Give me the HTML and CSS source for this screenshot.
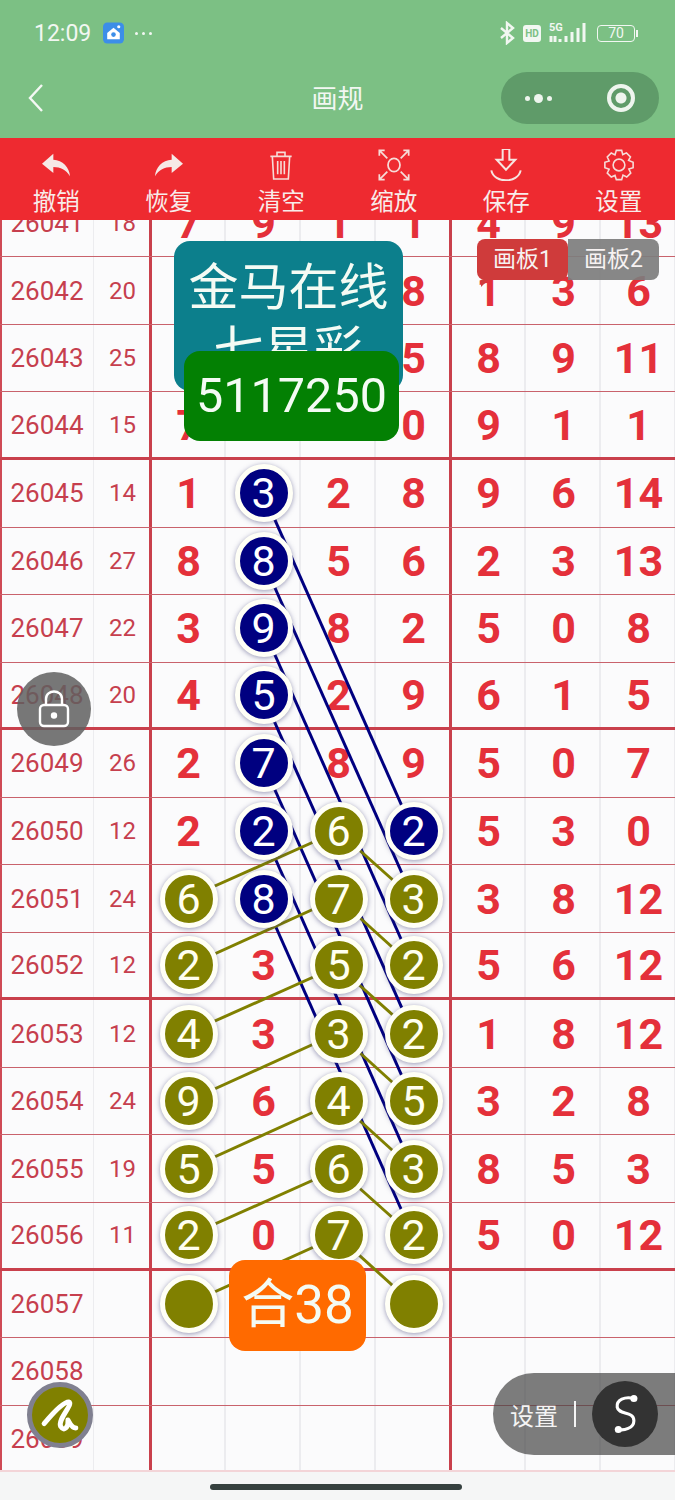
FILE: index.html
```html
<!DOCTYPE html>
<html lang="zh">
<head>
    <meta charset="UTF-8">
    <meta name="viewport" content="width=device-width, initial-scale=1.0">
    <title>画规</title>
    <link rel="stylesheet" href="styles.css">
</head>
<body>

    <header class="app-header">
        <div class="status-bar">
            <span class="clock">12:09</span>
            <svg class="app-icon" viewBox="0 0 20 20"><rect width="20" height="20" rx="4" fill="#3c8ee8"/><path d="M4 10 L10 5 L16 10 V16 H4 Z" fill="#fff"/><circle cx="10" cy="11.5" r="2.2" fill="#3c8ee8"/><circle cx="15" cy="4" r="1.5" fill="#fff"/></svg>
            <span class="status-dots"><i></i><i></i><i></i></span>
            <span class="status-right">
                <svg class="bt" viewBox="0 0 16 24"><path d="M2 7 L14 17 L8 22 V2 L14 7 L2 17" fill="none" stroke="#f2f7f2" stroke-width="2.4"/></svg>
                <span class="hd">HD</span>
                <svg class="signal" viewBox="0 0 40 22">
                    <text x="0" y="9" class="five-g">5G</text>
                    <path d="M2 20 V14 M6 20 V14 M11 20 v-3 M17 20 v-6 M23 20 V10 M29 20 V6 M35 20 V1" stroke="#f2f7f2" stroke-width="3" fill="none"/>
                </svg>
                <span class="battery">70</span><span class="battery-cap"></span>
            </span>
        </div>
        <div class="nav-bar">
            <svg class="back" viewBox="0 0 18 32"><path d="M15 3 L3 16 L15 29" fill="none" stroke="#f4f8f4" stroke-width="2.4"/></svg>
            <span class="nav-title">画规</span>
            <div class="capsule">
                <span class="capsule-dots"><i></i><i class="big"></i><i></i></span>
                <span class="capsule-target"></span>
            </div>
        </div>
    </header>

    <nav class="toolbar">
        <div class="tool">
            <svg viewBox="0 0 24 24"><path d="M10 3.5 L1.5 11 L10 18 V13.5 C15.5 13.5 19.5 15.5 22.5 20.5 C22 13.5 17 8.5 10 8 Z" fill="#f6e9e6"/></svg>
            <span>撤销</span>
        </div>
        <div class="tool">
            <svg class="flip" viewBox="0 0 24 24"><path d="M10 3.5 L1.5 11 L10 18 V13.5 C15.5 13.5 19.5 15.5 22.5 20.5 C22 13.5 17 8.5 10 8 Z" fill="#f6e9e6"/></svg>
            <span>恢复</span>
        </div>
        <div class="tool">
            <svg viewBox="0 0 24 24" fill="none" stroke="#f6dcd8" stroke-width="1.2"><path d="M4 5.5 H20 M9 5 V2.5 H15 V5 M5.5 5.5 L6.5 22.5 H17.5 L18.5 5.5 M9.5 9 V19 M12 9 V19 M14.5 9 V19"/></svg>
            <span>清空</span>
        </div>
        <div class="tool">
            <svg viewBox="0 0 24 24" fill="none" stroke="#f6dcd8" stroke-width="1.3"><ellipse cx="12" cy="12" rx="4.5" ry="5"/><path d="M1 5 V1 H5 M1 1 L7 7 M23 5 V1 H19 M23 1 L17 7 M1 19 V23 H5 M1 23 L7 17 M23 19 V23 H19 M23 23 L17 17"/></svg>
            <span>缩放</span>
        </div>
        <div class="tool">
            <svg viewBox="0 0 24 24" fill="none" stroke="#f6e4e0" stroke-width="1.5"><path d="M9.5 0 H14.5 V8 H19 L12 15.5 L5 8 H9.5 Z M1 16 C3 26 21 26 23 16"/></svg>
            <span>保存</span>
        </div>
        <div class="tool">
            <svg viewBox="0 0 24 24" fill="none" stroke="#f6dcd8" stroke-width="1.2"><circle cx="12" cy="12" r="4.4"/><path d="M10 1 H14 L14.8 4.2 L17.6 2.9 L20.6 5.9 L19.2 8.6 L22.6 10 V14 L19.4 15 L20.8 18 L17.8 21 L15 19.6 L14 23 H10 L9 19.8 L6.2 21 L3.2 18 L4.6 15.2 L1.4 14 V10 L4.6 9 L3.2 6 L6.2 3 L9 4.4 Z"/></svg>
            <span>设置</span>
        </div>
    </nav>

    <main class="board">
        <div class="sheet">
            <div class="row"><span class="id">26041</span><span class="sum">18</span><span class="d">7</span><span class="d">9</span><span class="d">1</span><span class="d">1</span><span class="d">4</span><span class="d">9</span><span class="d">13</span></div>
            <div class="row"><span class="id">26042</span><span class="sum">20</span><span class="d"></span><span class="d"></span><span class="d"></span><span class="d">8</span><span class="d">1</span><span class="d">3</span><span class="d">6</span></div>
            <div class="row"><span class="id">26043</span><span class="sum">25</span><span class="d"></span><span class="d"></span><span class="d"></span><span class="d">5</span><span class="d">8</span><span class="d">9</span><span class="d">11</span></div>
            <div class="row group-end"><span class="id">26044</span><span class="sum">15</span><span class="d">7</span><span class="d"></span><span class="d"></span><span class="d">0</span><span class="d">9</span><span class="d">1</span><span class="d">1</span></div>

            <div class="row"><span class="id">26045</span><span class="sum">14</span><span class="d">1</span><span class="d"><b class="ball navy">3</b></span><span class="d">2</span><span class="d">8</span><span class="d">9</span><span class="d">6</span><span class="d">14</span></div>
            <div class="row"><span class="id">26046</span><span class="sum">27</span><span class="d">8</span><span class="d"><b class="ball navy">8</b></span><span class="d">5</span><span class="d">6</span><span class="d">2</span><span class="d">3</span><span class="d">13</span></div>
            <div class="row"><span class="id">26047</span><span class="sum">22</span><span class="d">3</span><span class="d"><b class="ball navy">9</b></span><span class="d">8</span><span class="d">2</span><span class="d">5</span><span class="d">0</span><span class="d">8</span></div>
            <div class="row group-end"><span class="id">26048</span><span class="sum">20</span><span class="d">4</span><span class="d"><b class="ball navy">5</b></span><span class="d">2</span><span class="d">9</span><span class="d">6</span><span class="d">1</span><span class="d">5</span></div>

            <div class="row"><span class="id">26049</span><span class="sum">26</span><span class="d">2</span><span class="d"><b class="ball navy">7</b></span><span class="d">8</span><span class="d">9</span><span class="d">5</span><span class="d">0</span><span class="d">7</span></div>
            <div class="row"><span class="id">26050</span><span class="sum">12</span><span class="d">2</span><span class="d"><b class="ball navy">2</b></span><span class="d"><b class="ball olive">6</b></span><span class="d"><b class="ball navy">2</b></span><span class="d">5</span><span class="d">3</span><span class="d">0</span></div>
            <div class="row"><span class="id">26051</span><span class="sum">24</span><span class="d"><b class="ball olive">6</b></span><span class="d"><b class="ball navy">8</b></span><span class="d"><b class="ball olive">7</b></span><span class="d"><b class="ball olive">3</b></span><span class="d">3</span><span class="d">8</span><span class="d">12</span></div>
            <div class="row group-end"><span class="id">26052</span><span class="sum">12</span><span class="d"><b class="ball olive">2</b></span><span class="d">3</span><span class="d"><b class="ball olive">5</b></span><span class="d"><b class="ball olive">2</b></span><span class="d">5</span><span class="d">6</span><span class="d">12</span></div>

            <div class="row"><span class="id">26053</span><span class="sum">12</span><span class="d"><b class="ball olive">4</b></span><span class="d">3</span><span class="d"><b class="ball olive">3</b></span><span class="d"><b class="ball olive">2</b></span><span class="d">1</span><span class="d">8</span><span class="d">12</span></div>
            <div class="row"><span class="id">26054</span><span class="sum">24</span><span class="d"><b class="ball olive">9</b></span><span class="d">6</span><span class="d"><b class="ball olive">4</b></span><span class="d"><b class="ball olive">5</b></span><span class="d">3</span><span class="d">2</span><span class="d">8</span></div>
            <div class="row"><span class="id">26055</span><span class="sum">19</span><span class="d"><b class="ball olive">5</b></span><span class="d">5</span><span class="d"><b class="ball olive">6</b></span><span class="d"><b class="ball olive">3</b></span><span class="d">8</span><span class="d">5</span><span class="d">3</span></div>
            <div class="row group-end"><span class="id">26056</span><span class="sum">11</span><span class="d"><b class="ball olive">2</b></span><span class="d">0</span><span class="d"><b class="ball olive">7</b></span><span class="d"><b class="ball olive">2</b></span><span class="d">5</span><span class="d">0</span><span class="d">12</span></div>

            <div class="row"><span class="id">26057</span><span class="sum"></span><span class="d"><b class="ball olive"></b></span><span class="d"></span><span class="d"></span><span class="d"><b class="ball olive"></b></span><span class="d"></span><span class="d"></span><span class="d"></span></div>
            <div class="row"><span class="id">26058</span><span class="sum"></span><span class="d"></span><span class="d"></span><span class="d"></span><span class="d"></span><span class="d"></span><span class="d"></span><span class="d"></span></div>
            <div class="row"><span class="id">26059</span><span class="sum"></span><span class="d"></span><span class="d"></span><span class="d"></span><span class="d"></span><span class="d"></span><span class="d"></span><span class="d"></span></div>
        </div>

        <!-- lines between balls, y is measured from the top of the board -->
        <svg class="links" viewBox="0 0 675 1252">
            <g stroke="#000080" stroke-width="3">
                <line x1="263" y1="273" x2="413" y2="611"/>
                <line x1="263" y1="341" x2="413" y2="678"/>
                <line x1="263" y1="408" x2="413" y2="746"/>
                <line x1="263" y1="476" x2="413" y2="813"/>
                <line x1="263" y1="543" x2="413" y2="881"/>
                <line x1="263" y1="611" x2="413" y2="949"/>
                <line x1="263" y1="678" x2="413" y2="1016"/>
            </g>
            <g stroke="#808000" stroke-width="3">
                <line x1="188" y1="678" x2="338" y2="611"/>
                <line x1="188" y1="746" x2="338" y2="678"/>
                <line x1="188" y1="813" x2="338" y2="746"/>
                <line x1="188" y1="881" x2="338" y2="813"/>
                <line x1="188" y1="949" x2="338" y2="881"/>
                <line x1="188" y1="1016" x2="338" y2="949"/>
                <line x1="188" y1="1084" x2="338" y2="1016"/>
                <line x1="338" y1="611" x2="413" y2="678"/>
                <line x1="338" y1="678" x2="413" y2="746"/>
                <line x1="338" y1="746" x2="413" y2="813"/>
                <line x1="338" y1="813" x2="413" y2="881"/>
                <line x1="338" y1="881" x2="413" y2="949"/>
                <line x1="338" y1="949" x2="413" y2="1016"/>
                <line x1="338" y1="1016" x2="413" y2="1084"/>
            </g>
        </svg>

        <div class="tag tag-name">金马在线<br>七星彩</div>
        <div class="tag tag-code">5117250</div>
        <div class="tag tag-total">合38</div>

        <div class="tabs">
            <span class="tab active">画板1</span>
            <span class="tab">画板2</span>
        </div>

        <div class="lock">
            <svg viewBox="0 0 32 38" fill="none" stroke="#fff" stroke-width="2.4"><path d="M8 15 V9 C8 -1 24 -1 24 9 V15"/><rect x="2" y="15" width="28" height="21" rx="4"/><circle cx="16" cy="25.5" r="2" fill="#fff"/></svg>
        </div>

        <div class="pen">
            <svg viewBox="0 0 36 36" fill="none" stroke="#fff" stroke-width="3.4" stroke-linecap="round" stroke-linejoin="round"><path d="M7 24 C12 18 20 9 24 9 C28 10 16 21 18.5 26 C21 30 24 26 23.5 21.5 C25 24 26 27 29 27"/></svg>
        </div>

        <div class="settings-pill">
            <span>设置</span>
            <i class="pill-sep"></i>
            <span class="pill-logo">
                <svg viewBox="0 0 36 36" fill="none" stroke="#fff" stroke-width="2.8" stroke-linecap="round"><path d="M26 4 C18 2 10 5 11 12 C12 19 26 15 26 24 C26 31 17 33 12 32"/><circle cx="26" cy="4" r="3.2" fill="#fff" stroke="none"/><circle cx="12" cy="32" r="3.2" fill="#fff" stroke="none"/></svg>
            </span>
        </div>
    </main>

    <footer class="home-area"><span class="home-bar"></span></footer>

</body>
</html>
```

FILE: styles.css
```css
* { box-sizing: border-box; }

body {
    display: flex;
    flex-direction: column;
    width: 675px;
    height: 1500px;
    margin: 0;
    overflow: hidden;
    background-color: #f5f6f6;
    font-family: Roboto, "Noto Sans CJK SC", sans-serif;
}

/* header verde */
.app-header {
    height: 138px;
    background-color: #7cc084;
    color: #f2f7f2;
}

.status-bar {
    display: flex;
    align-items: center;
    height: 66px;
    padding: 0 37px 0 34px;
}

.clock { font-size: 23px; }

.app-icon { width: 21px; height: 22px; margin-left: 12px; }

.status-dots { display: flex; gap: 4px; margin-left: 11px; }
.status-dots i { width: 3px; height: 3px; border-radius: 50%; background-color: #f2f7f2; }

.status-right { display: flex; align-items: center; margin-left: auto; }
.bt { width: 16px; height: 24px; }

.hd {
    width: 18px;
    height: 17px;
    margin-left: 8px;
    border-radius: 3px;
    background-color: #f2f7f2;
    color: #7cc084;
    font-size: 10px;
    font-weight: 700;
    line-height: 17px;
    text-align: center;
}

.signal { width: 40px; height: 22px; margin-left: 8px; }
.five-g { fill: #f2f7f2; font-size: 11px; font-weight: 700; }

.battery {
    width: 38px;
    height: 17px;
    margin-left: 8px;
    border: 1.5px solid #f2f7f2;
    border-radius: 4px;
    font-size: 14px;
    line-height: 14px;
    text-align: center;
}

.battery-cap { width: 2px; height: 7px; margin-left: 1px; background-color: #f2f7f2; }

.nav-bar {
    position: relative;
    display: flex;
    align-items: center;
    justify-content: space-between;
    height: 64px;
    padding: 0 16px 0 27px;
}

.back { width: 18px; height: 32px; }

.nav-title {
    position: absolute;
    left: 0;
    right: 0;
    margin-top: -4px;
    font-size: 26px;
    text-align: center;
}

.capsule {
    display: flex;
    align-items: center;
    justify-content: space-between;
    width: 158px;
    height: 52px;
    padding: 0 24px;
    border-radius: 26px;
    background-color: #5f9b69;
}

.capsule-dots { display: flex; align-items: center; gap: 4px; }
.capsule-dots i { width: 5px; height: 5px; border-radius: 50%; background-color: #eef5ee; }
.capsule-dots i.big { width: 9px; height: 9px; }

.capsule-target {
    width: 28px;
    height: 28px;
    border: 4px solid #eef5ee;
    border-radius: 50%;
    background: radial-gradient(circle, #eef5ee 0 5px, transparent 6px);
}

/* barra de herramientas roja */
.toolbar {
    display: grid;
    grid-template-columns: repeat(6, 1fr);
    position: relative;
    z-index: 5;
    height: 82px;
    background-color: #ee2a30;
}

.tool {
    display: flex;
    flex-direction: column;
    align-items: center;
    padding-top: 11px;
    color: #f8ecea;
    font-size: 23.5px;
    line-height: 32px;
}

.tool svg { width: 32px; height: 32px; margin-bottom: 5px; }
.tool svg.flip { transform: scaleX(-1); }

/* tablero */
.board {
    position: relative;
    flex: 1;
    overflow: hidden;
    border-bottom: 2px solid #f3d5d8;
    background-color: #fbfbfc;
}

.sheet { margin-top: -30.2px; }

.row {
    display: grid;
    grid-template-columns: 94px 57px repeat(7, 75px);
    height: 67.55px;
    border-bottom: 1px solid #c9626c;
}

.row.group-end { border-bottom: 3px solid #c9404c; }

.row > span {
    display: flex;
    align-items: center;
    justify-content: center;
    box-shadow: inset -2px 0 0 #ececef;
}

.id { color: #c63f4e; font-size: 26px; }
.sum { color: #c63f4e; font-size: 24px; }
.row > .id { box-shadow: inset 2px 0 0 #cf4a56, inset -1px 0 0 #ececef; }
.row > .sum { box-shadow: inset -2px 0 0 #c9404c, 1px 0 0 #c9404c; }
.row > .d:nth-child(6) { box-shadow: inset -2px 0 0 #c9404c, 1px 0 0 #c9404c; }

.d { color: #e4303a; font-size: 43px; font-weight: 700; }

.ball {
    position: relative;
    z-index: 2;
    width: 58px;
    height: 58px;
    border: 5px solid #fffff6;
    border-radius: 50%;
    box-shadow: 0 1px 5px rgba(50, 50, 110, 0.5);
    color: #fff;
    font-weight: 400;
    line-height: 48px;
    text-align: center;
}

.navy { background-color: #000080; }
.olive { background-color: #808000; color: #fffff0; }

/* svg de enlaces entre bolas */
.links {
    position: absolute;
    left: 0;
    top: 0;
    z-index: 1;
    width: 675px;
    height: 1252px;
}

.tag {
    position: absolute;
    z-index: 3;
    border-radius: 16px;
    color: #f4fbf4;
    font-size: 50px;
    text-align: center;
}

.tag-name {
    left: 174px;
    top: 21px;
    width: 229px;
    height: 150px;
    overflow: hidden;
    padding-top: 16px;
    background-color: #0c7f8c;
    line-height: 62px;
}

.tag-code {
    left: 184px;
    top: 131px;
    width: 215px;
    height: 90px;
    background-color: #038003;
    font-size: 48.5px;
    line-height: 90px;
}

.tag-total {
    left: 229px;
    top: 1040px;
    width: 137px;
    height: 91px;
    background-color: #ff6a00;
    font-size: 53px;
    line-height: 91px;
}

.tabs {
    position: absolute;
    left: 477px;
    top: 19px;
    z-index: 3;
    display: flex;
    color: #f7f2f2;
    font-size: 23px;
    line-height: 41px;
}

.tab {
    width: 91px;
    height: 41px;
    border-radius: 0 8px 8px 0;
    background-color: rgba(125, 125, 125, 0.92);
    text-align: center;
}

.tab.active {
    position: relative;
    width: 91px;
    border-radius: 8px;
    background-color: #cf3b3b;
}

.tab.active::after {
    content: "";
    position: absolute;
    left: 4px;
    top: 41px;
    border-top: 7px solid #cf3b3b;
    border-right: 7px solid transparent;
}

.lock {
    position: absolute;
    left: 17px;
    top: 452px;
    z-index: 3;
    display: flex;
    align-items: center;
    justify-content: center;
    width: 74px;
    height: 74px;
    border-radius: 50%;
    background-color: rgba(95, 95, 95, 0.85);
}

.lock svg { width: 32px; height: 38px; }

.pen {
    position: absolute;
    left: 27px;
    top: 1162px;
    z-index: 3;
    display: flex;
    align-items: center;
    justify-content: center;
    width: 66px;
    height: 66px;
    border: 5px solid #808090;
    border-radius: 50%;
    background-color: #808000;
}

.pen svg { width: 52px; height: 52px; }

.settings-pill {
    position: absolute;
    left: 493px;
    top: 1153px;
    z-index: 3;
    display: flex;
    align-items: center;
    width: 182px;
    height: 82px;
    padding-left: 17px;
    border-radius: 41px 0 0 41px;
    background-color: rgba(70, 70, 70, 0.7);
    color: #f4f4f4;
    font-size: 24px;
}

.pill-sep { width: 2px; height: 26px; margin: 0 16px; background-color: #f4f4f4; }

.pill-logo {
    display: flex;
    align-items: center;
    justify-content: center;
    width: 66px;
    height: 66px;
    border-radius: 50%;
    background-color: #333;
}

.pill-logo svg { width: 40px; height: 40px; }

.home-area {
    display: flex;
    align-items: flex-end;
    justify-content: center;
    height: 28px;
    padding: 0 3px 10px 0;
}

.home-bar { width: 252px; height: 6px; border-radius: 3px; background-color: #36413f; }
```
